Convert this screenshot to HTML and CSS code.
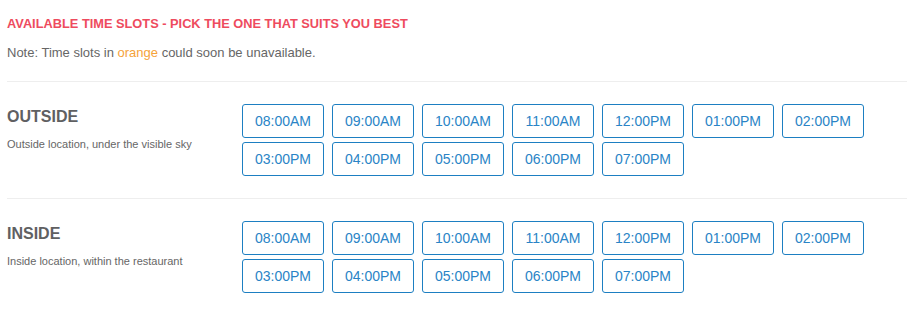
FILE: index.html
```html
<!DOCTYPE html>
<html lang="en">
<head>
<meta charset="utf-8"/>
<title>Time Slots</title>
<link rel="stylesheet" href="styles.css">
</head>
<body>
<div class="slots">
<h3 class="slots-title">Available time slots - pick the one that suits you best</h3>
<p class="note">Note: Time slots in <span class="orange">orange</span> could soon be unavailable.</p>

<div class="location">
<div class="loc-info">
<h4>Outside</h4>
<p>Outside location, under the visible sky</p>
</div>
<div class="times">
<button>08:00AM</button>
<button>09:00AM</button>
<button>10:00AM</button>
<button>11:00AM</button>
<button>12:00PM</button>
<button>01:00PM</button>
<button>02:00PM</button>
<button>03:00PM</button>
<button>04:00PM</button>
<button>05:00PM</button>
<button>06:00PM</button>
<button>07:00PM</button>
</div>
</div>

<div class="location">
<div class="loc-info">
<h4>Inside</h4>
<p>Inside location, within the restaurant</p>
</div>
<div class="times">
<button>08:00AM</button>
<button>09:00AM</button>
<button>10:00AM</button>
<button>11:00AM</button>
<button>12:00PM</button>
<button>01:00PM</button>
<button>02:00PM</button>
<button>03:00PM</button>
<button>04:00PM</button>
<button>05:00PM</button>
<button>06:00PM</button>
<button>07:00PM</button>
</div>
</div>
</div>
</body>
</html>
```

FILE: styles.css
```css
body {
  margin: 0;
  font-family: "Liberation Sans", Arial, sans-serif;
  background-color: #fff;
  color: #666;
}
.slots {
  padding: 16px 2px 0 7px;
}
.slots-title {
  margin: 0;
  font-size: 12.8px;
  font-weight: bold;
  text-transform: uppercase;
  color: #ee4b5e;
  line-height: 16px;
}
.note {
  margin: 13px 0 0;
  font-size: 13px;
  line-height: 16px;
  color: #666;
  padding-bottom: 20px;
}
.orange {
  color: #f5a23a;
}
.location {
  display: flex;
  border-top: 1px solid #eee;
  padding: 22px 0 22px;
}
.loc-info {
  width: 235px;
  flex-shrink: 0;
  padding-top: 4px;
}
.loc-info h4 {
  margin: 0;
  font-size: 16px;
  font-weight: bold;
  text-transform: uppercase;
  color: #5f6062;
  line-height: 18px;
}
.loc-info p {
  margin: 12px 0 0;
  font-size: 11px;
  color: #666;
  line-height: 13px;
}
.times {
  display: flex;
  flex-wrap: wrap;
  gap: 4px 8px;
  max-width: 640px;
}
.times button {
  width: 82px;
  height: 34px;
  padding: 0;
  font-family: inherit;
  font-size: 14px;
  color: #2a84c6;
  background-color: #fff;
  border: 1px solid #1d7fc2;
  border-radius: 3px;
  cursor: pointer;
}
.times button:hover {
  background-color: #f2f8fc;
}
```
